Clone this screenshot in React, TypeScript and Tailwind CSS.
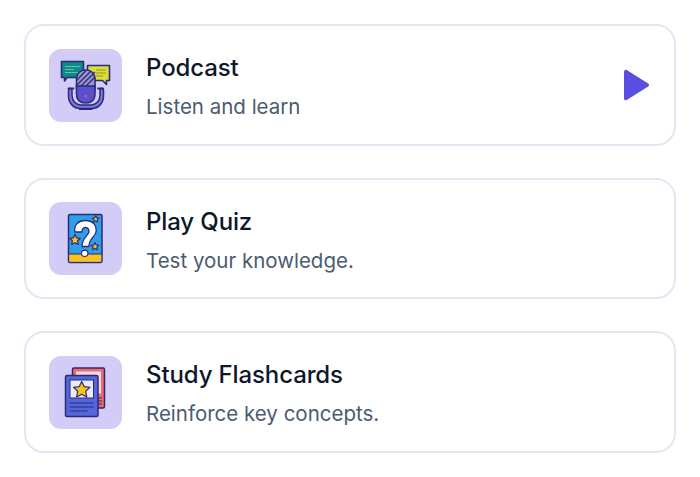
const font = "font-['Inter',sans-serif]";

const INK = "#2b2a7a";

function PodcastIcon() {
  return (
    <svg viewBox="0 0 73 73" className="w-[73px] h-[73px]">
      <path d="M12.500 12.500h22v16H18l-2.500 3.500v-3.500h-3z" fill="#0f8a86" stroke={INK} strokeWidth="1.600" strokeLinejoin="round" />
      <path d="M16 17.500h15M16 20.500h9M16 23.500h15" stroke="#5fc4b4" strokeWidth="1" />
      <path d="M38.500 16.500h22v15h-3v4L53.500 31.500h-15z" fill="#d9de3c" stroke={INK} strokeWidth="1.600" strokeLinejoin="round" />
      <path d="M47 21h10M47 24h10M47 27h7" stroke="#8f9428" strokeWidth="1" />
      <path d="M20.500 39.500c-.5 0-1 .5-1 1.500v6c0 7 5 12.500 12 12.500h11c7 0 12-5.500 12-12.500v-6c0-1-.5-1.500-1-1.500h-1.500c-.5 0-1 .5-1 1.500v5.500c0 5.500-4 9.500-9 9.500H32c-5 0-9-4-9-9.500V41c0-1-.5-1.500-1-1.500z" fill="#7f78d8" stroke={INK} strokeWidth="1.500" strokeLinejoin="round" />
      <path d="M19.500 39.500h5M49 39.500h5" stroke={INK} strokeWidth="1.800" strokeLinecap="round" />
      <rect x="27.500" y="21" width="18.500" height="26" rx="8.500" fill="#9a97c8" stroke={INK} strokeWidth="1.600" />
      <path d="M28 31l9-9.500M28 36l14-14M28 41l18-18M30 44l16-16" stroke={INK} strokeWidth="1.300" />
      <path d="M27.500 37h18.500v8c0 6-3.500 9-9.250 9s-9.250-3-9.250-9z" fill="#5a4fcf" stroke={INK} strokeWidth="1.600" />
      <circle cx="36.700" cy="47" r="1.500" fill="#e0507a" />
      <path d="M30 60h13.500" stroke={INK} strokeWidth="1.800" />
    </svg>
  );
}

function QuizIcon() {
  return (
    <svg viewBox="0 0 73 73" className="w-[73px] h-[73px]">
      <rect x="19.500" y="12.500" width="33.500" height="48" rx="1.500" fill="#2e9fe6" stroke={INK} strokeWidth="1.500" />
      <path d="M20.200 52h32.100v7.200a.6.6 0 0 1-.6.6H20.800a.6.6 0 0 1-.6-.6z" fill="#fbc21a" />
      <path d="M19.500 52h33.500" stroke={INK} strokeWidth="1.200" />
      <path d="M26 30c-1.500-7 3.500-11.500 10.500-11.500S48 23 47 30c-.8 5-7 6-7 14.500h-7c0-9 6.500-11 7-14.500.3-2.500-1-4.500-3.500-4.500S32.700 27.500 33 30z" fill="#fff" stroke={INK} strokeWidth="1.300" strokeLinejoin="round" />
      <circle cx="35.700" cy="51.300" r="3.200" fill="#fff" stroke={INK} strokeWidth="1.100" />
      <path d="M26 32.500l1.600 3.300 3.700.5-2.700 2.500.7 3.700-3.300-1.800-3.300 1.800.7-3.700-2.700-2.500 3.700-.5z" fill="#fbc21a" stroke={INK} strokeWidth="1.200" strokeLinejoin="round" />
      <path d="M46.700 13.700l1 2.100 2.300.3-1.700 1.600.4 2.300-2-1.100-2 1.100.4-2.300-1.700-1.600 2.300-.3z" fill="#fbc21a" stroke={INK} strokeWidth="1.100" strokeLinejoin="round" />
      <path d="M46 40.500l1.200 2.400 2.600.4-1.900 1.800.5 2.600-2.400-1.300-2.400 1.300.5-2.600-1.900-1.800 2.600-.4z" fill="#fbc21a" stroke={INK} strokeWidth="1.100" strokeLinejoin="round" />
    </svg>
  );
}

function FlashcardsIcon() {
  return (
    <svg viewBox="0 0 73 73" className="w-[73px] h-[73px]">
      <rect x="23.500" y="12" width="32" height="40" rx="1.500" fill="#ef6a6a" stroke={INK} strokeWidth="1.500" />
      <rect x="27" y="15.500" width="25" height="22" fill="#f4d9dc" />
      <path d="M49 42h4M49 45h4M49 48h4" stroke={INK} strokeWidth="1" />
      <rect x="16.500" y="19.500" width="32.500" height="41" rx="1.500" fill="#5566dc" stroke={INK} strokeWidth="1.500" />
      <rect x="21" y="24" width="23.500" height="18" fill="#eceaf6" stroke={INK} strokeWidth="1" />
      <path d="M32.700 25.500l2.500 5.200 5.700.7-4.200 3.900 1.100 5.700-5.100-2.800-5.100 2.800 1.100-5.700-4.200-3.900 5.700-.7z" fill="#fbc21a" stroke={INK} strokeWidth="1.200" strokeLinejoin="round" />
      <path d="M20.500 47h24M20.500 51h24M20.500 55h18" stroke={INK} strokeWidth="1.200" />
    </svg>
  );
}

function OptionCard({ title, subtitle, icon, playing }: { title: string; subtitle: string; icon: React.ReactNode; playing?: boolean }) {
  return (
    <div className="h-[121.500px] flex items-center justify-between rounded-[20px] border-2 border-[#e2e8f3] bg-white pt-px pl-[23px] pr-[24px]">
      <div className="flex items-center gap-6">
        <div className="w-[73px] h-[73px] rounded-xl bg-[#d3ccf6] overflow-hidden">{icon}</div>
        <div className="flex flex-col gap-[9px] pt-[3px]">
          <div className="text-[24px] leading-[32px] font-medium tracking-[-0.12px] text-[#0f172a]">{title}</div>
          <div className="text-[20.500px] leading-[28px] text-[#4b5b70]">{subtitle}</div>
        </div>
      </div>
      {playing && (
        <svg viewBox="0 0 28 34" className="w-[28px] h-[34px]">
          <path d="M2 3.500v27a1.800 1.800 0 0 0 2.700 1.500l21.500-13.500a1.800 1.800 0 0 0 0-3L4.700 2A1.800 1.800 0 0 0 2 3.500z" fill="#5b4ee0" />
        </svg>
      )}
    </div>
  );
}

export default function App() {
  return (
    <div className={`${font} w-[700px] h-[477px] bg-white p-6 flex flex-col gap-8`}>
      <OptionCard title="Podcast" subtitle="Listen and learn" icon={<PodcastIcon />} playing />
      <OptionCard title="Play Quiz" subtitle="Test your knowledge." icon={<QuizIcon />} />
      <OptionCard title="Study Flashcards" subtitle="Reinforce key concepts." icon={<FlashcardsIcon />} />
    </div>
  );
}
